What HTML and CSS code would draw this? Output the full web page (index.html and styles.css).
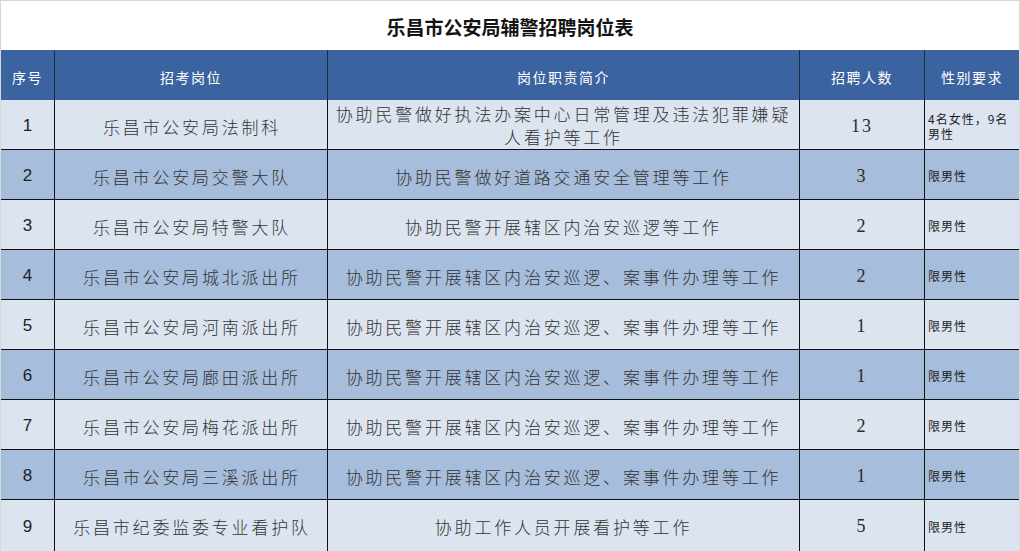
FILE: index.html
```html
<!DOCTYPE html>
<html lang="zh-CN">
<head>
<meta charset="utf-8">
<title>乐昌市公安局辅警招聘岗位表</title>
<link rel="stylesheet" href="styles.css">
</head>
<body>
<div class="sheet">
  <div class="title">乐昌市公安局辅警招聘岗位表</div>
  <div class="grid">
    <div class="hd c1">序号</div>
    <div class="hd c2">招考岗位</div>
    <div class="hd c3">岗位职责简介</div>
    <div class="hd c4">招聘人数</div>
    <div class="hd c5">性别要求</div>

    <div class="cell c1 light">1</div>
    <div class="cell c2 light">乐昌市公安局法制科</div>
    <div class="cell c3 light two">协助民警做好执法办案中心日常管理及违法犯罪嫌疑<br>人看护等工作</div>
    <div class="cell c4 light">13</div>
    <div class="cell c5 light">4名女性，9名<br>男性</div>

    <div class="cell c1 dark">2</div>
    <div class="cell c2 dark">乐昌市公安局交警大队</div>
    <div class="cell c3 dark">协助民警做好道路交通安全管理等工作</div>
    <div class="cell c4 dark">3</div>
    <div class="cell c5 dark">限男性</div>

    <div class="cell c1 light">3</div>
    <div class="cell c2 light">乐昌市公安局特警大队</div>
    <div class="cell c3 light">协助民警开展辖区内治安巡逻等工作</div>
    <div class="cell c4 light">2</div>
    <div class="cell c5 light">限男性</div>

    <div class="cell c1 dark">4</div>
    <div class="cell c2 dark">乐昌市公安局城北派出所</div>
    <div class="cell c3 dark">协助民警开展辖区内治安巡逻、案事件办理等工作</div>
    <div class="cell c4 dark">2</div>
    <div class="cell c5 dark">限男性</div>

    <div class="cell c1 light">5</div>
    <div class="cell c2 light">乐昌市公安局河南派出所</div>
    <div class="cell c3 light">协助民警开展辖区内治安巡逻、案事件办理等工作</div>
    <div class="cell c4 light">1</div>
    <div class="cell c5 light">限男性</div>

    <div class="cell c1 dark">6</div>
    <div class="cell c2 dark">乐昌市公安局廊田派出所</div>
    <div class="cell c3 dark">协助民警开展辖区内治安巡逻、案事件办理等工作</div>
    <div class="cell c4 dark">1</div>
    <div class="cell c5 dark">限男性</div>

    <div class="cell c1 light">7</div>
    <div class="cell c2 light">乐昌市公安局梅花派出所</div>
    <div class="cell c3 light">协助民警开展辖区内治安巡逻、案事件办理等工作</div>
    <div class="cell c4 light">2</div>
    <div class="cell c5 light">限男性</div>

    <div class="cell c1 dark">8</div>
    <div class="cell c2 dark">乐昌市公安局三溪派出所</div>
    <div class="cell c3 dark">协助民警开展辖区内治安巡逻、案事件办理等工作</div>
    <div class="cell c4 dark">1</div>
    <div class="cell c5 dark">限男性</div>

    <div class="cell c1 light end">9</div>
    <div class="cell c2 light end">乐昌市纪委监委专业看护队</div>
    <div class="cell c3 light end">协助工作人员开展看护等工作</div>
    <div class="cell c4 light end">5</div>
    <div class="cell c5 light end">限男性</div>
  </div>
</div>
</body>
</html>
```
FILE: styles.css
```css
html, body {
  margin: 0;
  padding: 0;
  background: #ffffff;
}
.sheet {
  width: 1020px;
  height: 551px;
  box-sizing: border-box;
  border-top: 1px solid #d8d8d8;
  border-left: 1px solid #d8d8d8;
  border-right: 1px solid #d8d8d8;
  overflow: hidden;
  font-family: "Noto Sans CJK SC", sans-serif;
}
.title {
  height: 49px;
  display: flex;
  align-items: center;
  justify-content: center;
  font-size: 19px;
  font-weight: 700;
  color: #141414;
  padding-top: 1px;
  box-sizing: border-box;
}
.grid {
  display: grid;
  grid-template-columns: 54px 273px 472px 125px 94px;
  grid-template-rows: repeat(9, 50px) 52px;
}
.hd {
  background: #3b63a0;
  color: #ffffff;
  font-size: 14px;
  letter-spacing: 1.5px;
  display: flex;
  align-items: center;
  justify-content: center;
  padding-top: 4px;
  box-sizing: border-box;
  border-right: 1px solid #1c2a44;
}
.cell {
  box-sizing: border-box;
  border-right: 1px solid #111111;
  border-bottom: 1px solid #111111;
  display: flex;
  align-items: center;
  justify-content: center;
  color: #333333;
  font-size: 17px;
  font-weight: 300;
  letter-spacing: 2.8px;
  padding-top: 3px;
  text-align: center;
}
.cell.end {
  border-bottom: none;
  padding-bottom: 2px;
}
.c5 {
  border-right: none;
}
.light {
  background: #dce4f0;
}
.dark {
  background: #a7bddc;
}
.cell.c1 {
  font-family: "Liberation Sans", Arial, sans-serif;
  font-size: 17px;
  font-weight: 400;
  letter-spacing: 0;
  color: #1e1e1e;
}
.cell.c2 {
  padding-left: 2px;
}
.cell.c3.two {
  line-height: 23px;
  padding-top: 1px;
}
.cell.c4 {
  font-family: "Liberation Serif", "Times New Roman", serif;
  font-size: 18px;
  font-weight: 400;
  letter-spacing: 2px;
  color: #2a2a2a;
}
.cell.c5 {
  justify-content: flex-start;
  text-align: left;
  font-size: 12px;
  font-weight: 400;
  letter-spacing: 1px;
  line-height: 15px;
  padding-left: 3px;
  padding-top: 2px;
  color: #1e1e1e;
}
```
